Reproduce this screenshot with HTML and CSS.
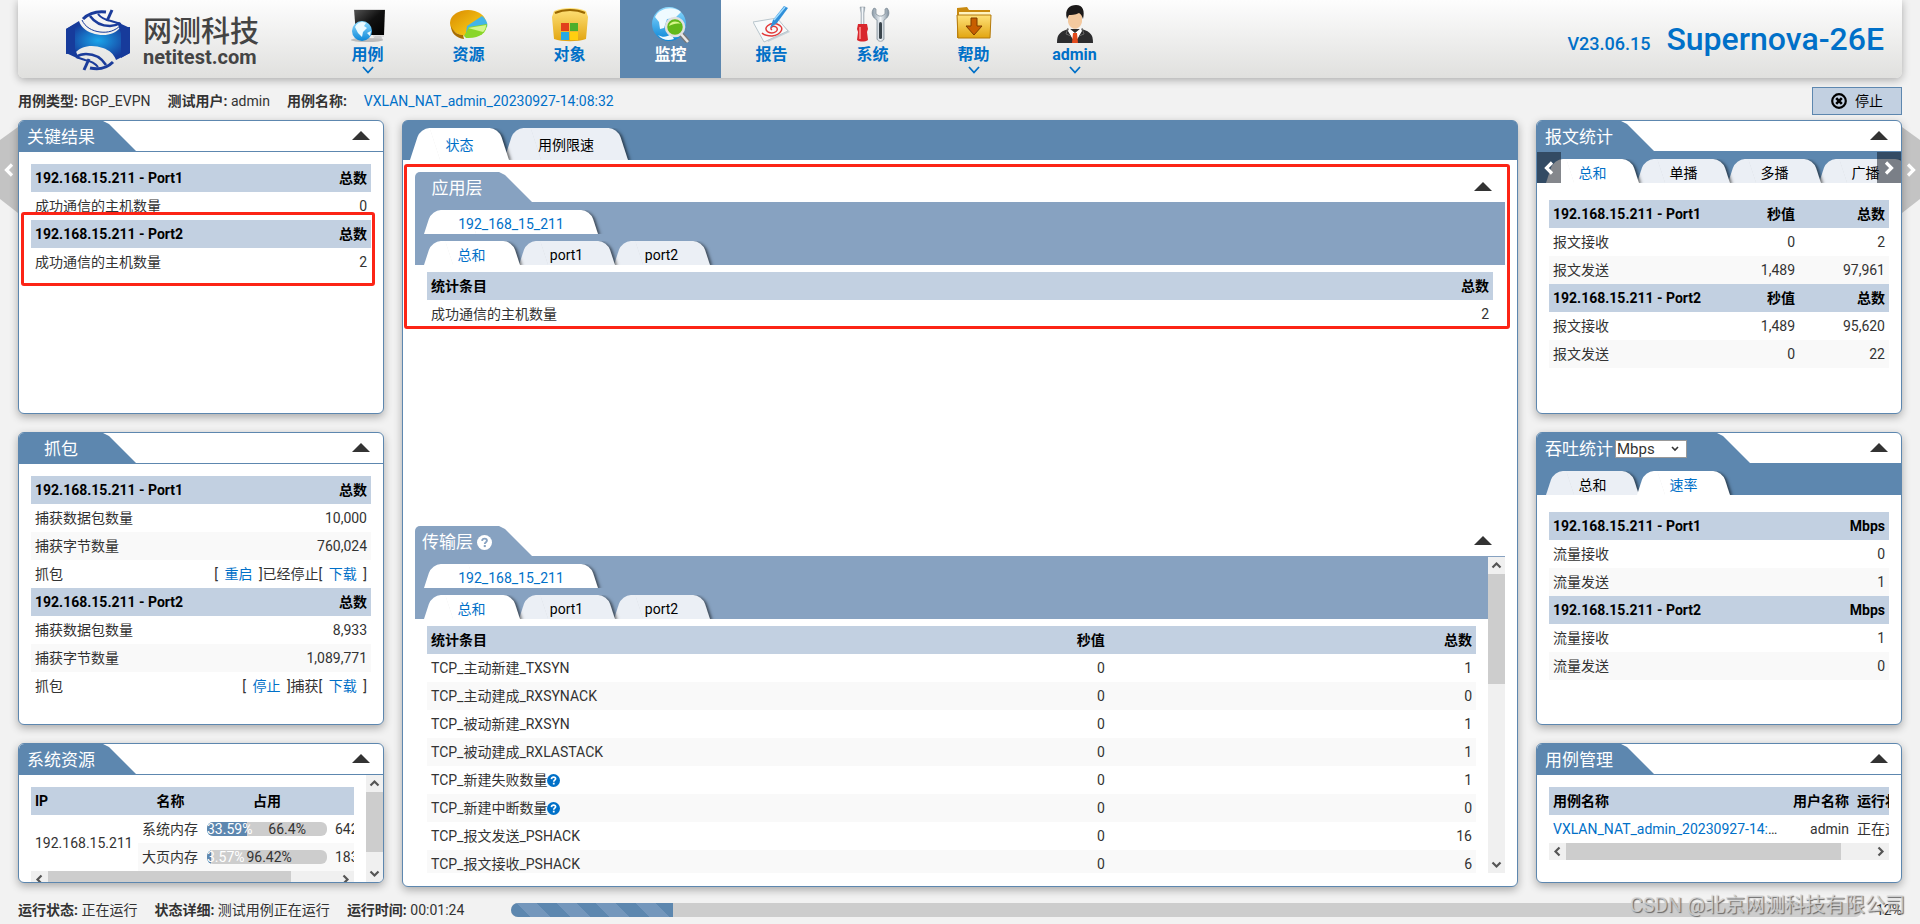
FILE: index.html
```html
<!DOCTYPE html>
<html lang="zh-CN">
<head>
<meta charset="utf-8">
<title>Supernova-26E</title>
<link rel="stylesheet" href="styles.css">
</head>
<body>
<svg class="defs" aria-hidden="true">
  <defs>
    <linearGradient id="gBlue" x1="0" y1="0" x2="0" y2="1"><stop offset="0" stop-color="#8fdcff"/><stop offset="1" stop-color="#0a86d8"/></linearGradient>
    <radialGradient id="gLogo"><stop offset="0" stop-color="#1aa5ea"/><stop offset="1" stop-color="#163a9a"/></radialGradient>
    <linearGradient id="gGold" x1="0" y1="0" x2="0" y2="1"><stop offset="0" stop-color="#ffe27a"/><stop offset="1" stop-color="#e2a511"/></linearGradient>
    <linearGradient id="gPie" x1="0" y1="0" x2="1" y2="1"><stop offset="0" stop-color="#d98a00"/><stop offset="1" stop-color="#ffdc1e"/></linearGradient>
    <linearGradient id="gDark" x1="0" y1="0" x2="1" y2="1"><stop offset="0" stop-color="#555"/><stop offset=".5" stop-color="#111"/><stop offset="1" stop-color="#000"/></linearGradient>
    <linearGradient id="gSteel" x1="0" y1="0" x2="1" y2="0"><stop offset="0" stop-color="#8797a5"/><stop offset=".5" stop-color="#f2f6f9"/><stop offset="1" stop-color="#7e8e9c"/></linearGradient>
    <symbol id="i-q" viewBox="0 0 16 16"><circle cx="8" cy="8" r="8" fill="currentColor"/><path d="M5.4 6.2C5.6 4.400 6.700 3.800 8.100 3.800c1.500 0 2.500.8 2.500 2.100 0 1.700-2.300 1.800-2.300 3.600" fill="none" stroke="var(--hole)" stroke-width="2"/><rect x="7.200" y="10.700" width="2.200" height="2.200" fill="var(--hole)"/></symbol>
    <symbol id="i-up" viewBox="0 0 17 17"><path d="M4.500 10.500l4-4 4 4" fill="none" stroke="#555" stroke-width="2.200"/></symbol>
    <symbol id="i-down" viewBox="0 0 17 17"><path d="M4.500 6.500l4 4 4-4" fill="none" stroke="#555" stroke-width="2.200"/></symbol>
    <symbol id="i-left" viewBox="0 0 17 17"><path d="M10.500 4.500l-4 4 4 4" fill="none" stroke="#555" stroke-width="2.200"/></symbol>
    <symbol id="i-right" viewBox="0 0 17 17"><path d="M6.500 4.500l4 4-4 4" fill="none" stroke="#555" stroke-width="2.200"/></symbol>
    <symbol id="i-prev" viewBox="0 0 10 14"><path d="M8 1.500L2.500 7 8 12.500" fill="none" stroke="#fff" stroke-width="3.200"/></symbol>
    <symbol id="i-next" viewBox="0 0 10 14"><path d="M2 1.500L7.500 7 2 12.500" fill="none" stroke="#fff" stroke-width="3.200"/></symbol>
    <symbol id="i-tri" viewBox="0 0 18 9"><path d="M0 9L9 0l9 9z" fill="#333"/></symbol>
    <symbol id="i-chev" viewBox="0 0 12 8"><path d="M1 1l5 5.500L11 1" fill="none" stroke="#0070c8" stroke-width="1.800"/></symbol>
  </defs>
</svg>

<header class="top">
  <a class="brand" href="#" aria-label="netitest.com">
    <svg width="66" height="62" viewBox="0 0 66 62">
      <path d="M1 20L14 12c2 6 7 10 13 12 11 4 22 2 28-5l10-1v26l-14 7c-2-6-7-10-13-12-11-4-22-2-28 5L1 45z" fill="url(#gLogo)"/>
      <path d="M52 13l13 6v25l-9 5V24z" fill="#173b9b"/>
      <path d="M14 50L1 44V20l9-5v25z" fill="#173b9b"/>
      <path d="M17 11c3 7 10 11 18 12 8 1 15-1 21-7" fill="none" stroke="#173b9b" stroke-width="1"/>
      <path d="M18 10c6-6 14-8 23-7" fill="none" stroke="#1b3c9b" stroke-width="3"/>
      <path d="M25 7c5 7 12 10 20 10 4 0 7-1 10-3" fill="none" stroke="#1b3c9b" stroke-width="2.500"/>
      <path d="M33 5c3 4 8 6 13 7l10 3" fill="none" stroke="#1b3c9b" stroke-width="2"/>
      <path d="M47 1l-5 11" stroke="#1b3c9b" stroke-width="3"/>
      <path d="M48 53c-6 6-14 8-23 6" fill="none" stroke="#1b3c9b" stroke-width="3"/>
      <path d="M41 56c-5-8-12-11-20-11-4 0-7 1-10 3" fill="none" stroke="#1b3c9b" stroke-width="2.500"/>
      <path d="M33 58c-3-4-8-6-13-7l-9-3" fill="none" stroke="#1b3c9b" stroke-width="2"/>
      <path d="M19 61l5-11" stroke="#1b3c9b" stroke-width="3"/>
    </svg>
    <span class="brand-text"><span class="brand-cn">网测科技</span><span class="brand-en">netitest.com</span></span>
  </a>
  <nav class="nav">
    <a class="nav-item" href="#">
      <svg class="nav-icon" viewBox="0 0 38 38"><path d="M5 4h31l-1 26H7z" fill="url(#gDark)"/><path d="M5 4h31v1H5zM24 30h11v2H24z" fill="#ddd"/><path d="M26 31h6l2 4h-11z" fill="#ccc"/><ellipse cx="18" cy="35" rx="16" ry="2" fill="#bbb"/><circle cx="13" cy="26" r="10" fill="url(#gBlue)"/><path d="M6 22c2-5 8-6 11-4l-2 3 3 2-4 4-1 5-4-4zM18 28l4-2-1 5z" fill="#eafaff"/></svg>
      <span>用例</span><svg class="nav-chev"><use href="#i-chev"/></svg></a>
    <a class="nav-item" href="#">
      <svg class="nav-icon" viewBox="0 0 38 38"><ellipse cx="18" cy="18" rx="18" ry="13" fill="url(#gPie)"/><path d="M1 21c3 7 8 9 12 9l1 4C6 33 1 28 1 21z" fill="#a86d00"/><path d="M17 21l15-10c5 4 6 8 5 11l-21 6z" fill="#43b5e8"/><path d="M14 31l5-9 18-3c0 9-8 15-21 14z" fill="#8ad62a"/><path d="M18 23l18-3c0 3-1 5-3 7z" fill="#d3f58d"/></svg>
      <span>资源</span><svg class="nav-chev"></svg></a>
    <a class="nav-item" href="#">
      <svg class="nav-icon" viewBox="0 0 38 38"><path d="M3 6c8-4 24-4 32 0l2 6-2 22c-8 3-24 3-32 0L1 12z" fill="url(#gGold)"/><path d="M4 8c9-4 21-4 30 0" fill="none" stroke="#9a6700" stroke-width="2"/><path d="M10 18h8v8h-8z" fill="#e2401b"/><path d="M19 18h8v8h-8z" fill="#4eae2b"/><path d="M10 27h8v8h-8z" fill="#28a9e5"/><path d="M19 27h8v8h-8z" fill="#ffcf10"/></svg>
      <span>对象</span><svg class="nav-chev"></svg></a>
    <a class="nav-item is-active" href="#">
      <svg class="nav-icon" viewBox="0 0 38 38"><circle cx="17" cy="19" r="17" fill="url(#gBlue)"/><path d="M3 12C8 2 22 1 29 7l-6 6-8 1-3 9-4 1-1-7zM6 30c5 3 9 2 13-1l3 5c-6 2-12 1-16-4z" fill="#effaff"/><path d="M29 29l7 8" stroke="#777" stroke-width="5"/><path d="M29 29l7 8" stroke="#e8e8e8" stroke-width="2.500"/><circle cx="23" cy="22" r="9" fill="#62b81a" stroke="#e0e0e0" stroke-width="2.500"/><path d="M17 21c1-5 8-6 12-2-4-1-8 0-12 2z" fill="#d7f68b"/></svg>
      <span>监控</span><svg class="nav-chev"></svg></a>
    <a class="nav-item" href="#">
      <svg class="nav-icon" viewBox="0 0 38 38"><path d="M4 16l27 5 6 6-22 10z" fill="#c9d4da"/><path d="M0 17l24-4 11 13-24 11z" fill="#f7fafb" stroke="#b8c5cc"/><path d="M19 25c-3-2 1-5 4-3 4 3-2 8-8 5-6-4 2-10 9-8 9 3 4 11-5 12-4 0-8-1-10-3" fill="none" stroke="#e23a3a" stroke-width="1.500"/><path d="M17 23l3-8L31 1l4 2-11 15z" fill="#2f8fd9"/><path d="M21 15L32 2" stroke="#9fdcff" stroke-width="1.500"/></svg>
      <span>报告</span><svg class="nav-chev"></svg></a>
    <a class="nav-item" href="#">
      <svg class="nav-icon" viewBox="0 0 38 38"><path d="M6 2h5l-1 6v12H7V8z" fill="url(#gSteel)" stroke="#8c979f" stroke-width=".5"/><path d="M4 19h9l1 5-1 3 1 8c-3 2-8 2-11 0l1-8-1-3z" fill="#d8262c"/><path d="M6 22v12" stroke="#ff9a94" stroke-width="1.500"/><path d="M20 3c-4 5-1 10 3 12v19c1 3 6 3 7 0V15c4-2 7-7 3-12l-2 1 0 5-3 2h-3l-3-2V4z" fill="url(#gSteel)" stroke="#75848f" stroke-width=".7"/><rect x="25" y="17" width="3" height="17" rx="1.500" fill="#3a444b"/></svg>
      <span>系统</span><svg class="nav-chev"></svg></a>
    <a class="nav-item" href="#">
      <svg class="nav-icon" viewBox="0 0 38 38"><path d="M2 3l10-1 2 3h21v28H2z" fill="#c98a10"/><path d="M4 7h31v3H4z" fill="#fff3c0"/><path d="M2 10h34l-1 23H3z" fill="url(#gGold)" stroke="#b47a0c"/><path d="M16 13h6v8h5l-8 9-8-9h5z" fill="#c85e00" stroke="#7d3c00"/></svg>
      <span>帮助</span><svg class="nav-chev"><use href="#i-chev"/></svg></a>
    <a class="nav-item" href="#">
      <svg class="nav-icon" viewBox="0 0 38 38"><path d="M1 38c0-8 2-11 11-14h14c9 3 11 6 11 14z" fill="#2c2c2e"/><path d="M13 23l6 5 6-5 1 3-7 12-7-12z" fill="#fff"/><path d="M17 28h4l1 10h-6z" fill="#e24a1c"/><path d="M12 23l-2 6 5 2M26 23l2 6-5 2" fill="none" stroke="#666"/><path d="M12 10c0-6 14-6 14 0v7c-2 9-12 9-14 0z" fill="#f3c99f"/><path d="M11 14C8 4 14 0 20 0c7 0 9 6 7 14-1-3-2-5-4-6-4 2-8 2-10 2z" fill="#1c1a1a"/></svg>
      <span>admin</span><svg class="nav-chev"><use href="#i-chev"/></svg></a>
  </nav>
  <div class="product"><span class="version">V23.06.15</span><span class="model">Supernova-26E</span></div>
</header>

<div class="info">
  <div class="facts">
    <span><b>用例类型:</b> BGP_EVPN</span>
    <span><b>测试用户:</b> admin</span>
    <span><b>用例名称:</b></span>
    <a href="#">VXLAN_NAT_admin_20230927-14:08:32</a>
  </div>
  <button class="stop" type="button">
    <svg width="16" height="16" viewBox="0 0 16 16"><circle cx="8" cy="8" r="6.800" fill="none" stroke="#000" stroke-width="2.200"/><path d="M5.200 5.200l5.600 5.600M10.800 5.200l-5.600 5.600" stroke="#000" stroke-width="2.600"/></svg>停止</button>
</div>

<main class="board">
  <button class="side side-left" type="button" aria-label="上一页"><svg width="10" height="14"><use href="#i-prev"/></svg></button>
  <button class="side side-right" type="button" aria-label="下一页"><svg width="10" height="14"><use href="#i-next"/></svg></button>

  <div class="col">
    <section class="panel tall">
      <div class="phead"><h2 class="ptitle">关键结果</h2><button class="fold" type="button" aria-label="折叠"><svg><use href="#i-tri"/></svg></button></div>
      <div class="pbody">
        <table>
          <tbody><tr><th>192.168.15.211 - Port1</th><th>总数</th></tr><tr><td>成功通信的主机数量</td><td>0</td></tr></tbody>
          <tbody><tr><th>192.168.15.211 - Port2</th><th>总数</th></tr><tr><td>成功通信的主机数量</td><td>2</td></tr></tbody>
        </table>
      </div>
      <div class="mark mark-port"></div>
    </section>

    <section class="panel tall">
      <div class="phead"><h2 class="ptitle">抓包</h2><button class="fold" type="button" aria-label="折叠"><svg><use href="#i-tri"/></svg></button></div>
      <div class="pbody">
        <table>
          <tbody><tr><th>192.168.15.211 - Port1</th><th>总数</th></tr>
          <tr><td>捕获数据包数量</td><td>10,000</td></tr><tr><td>捕获字节数量</td><td>760,024</td></tr>
          <tr><td>抓包</td><td>[ <a class="act" href="#">重启</a> ]已经停止[ <a class="act" href="#">下载</a> ]</td></tr></tbody>
          <tbody><tr><th>192.168.15.211 - Port2</th><th>总数</th></tr>
          <tr><td>捕获数据包数量</td><td>8,933</td></tr><tr><td>捕获字节数量</td><td>1,089,771</td></tr>
          <tr><td>抓包</td><td>[ <a class="act" href="#">停止</a> ]捕获[ <a class="act" href="#">下载</a> ]</td></tr></tbody>
        </table>
      </div>
    </section>

    <section class="panel short">
      <div class="phead"><h2 class="ptitle">系统资源</h2><button class="fold" type="button" aria-label="折叠"><svg><use href="#i-tri"/></svg></button></div>
      <div class="scroller">
        <div class="pbody">
          <div class="clip">
            <table class="res">
              <colgroup><col class="c-ip"><col class="c-name"><col class="c-use"><col class="c-size"></colgroup>
              <tbody>
                <tr><th>IP</th><th>名称</th><th>占用</th><th></th></tr>
                <tr><td rowspan="2">192.168.15.211</td><td>系统内存</td><td><div class="meter"><span class="used" style="width:33.59%">33.59%</span><span class="free">66.4%</span></div></td><td>6424MB</td></tr>
                <tr><td>大页内存</td><td><div class="meter"><span class="used" style="width:3.57%">3.57%</span><span class="free">96.42%</span></div></td><td>18342MB</td></tr>
              </tbody>
            </table>
          </div>
          <div class="hbar"><svg><use href="#i-left"/></svg><div class="track"><div class="thumb" style="width:84%"></div></div><svg><use href="#i-right"/></svg></div>
        </div>
        <div class="vbar"><svg><use href="#i-up"/></svg><div class="track"><div class="thumb" style="height:82%"></div></div><svg><use href="#i-down"/></svg></div>
      </div>
    </section>
  </div>

  <section class="panel center">
    <div class="tabs tabs-main"><button class="tab on" type="button"><span>状态</span></button><button class="tab" type="button"><span>用例限速</span></button></div>
    <div class="stack">
      <section class="layer layer-app">
        <div class="phead"><h3 class="ptitle">应用层</h3><button class="fold" type="button" aria-label="折叠"><svg><use href="#i-tri"/></svg></button></div>
        <div class="tabs"><button class="tab wide on" type="button"><span>192_168_15_211</span></button></div>
        <div class="tabs"><button class="tab on" type="button"><span>总和</span></button><button class="tab" type="button"><span>port1</span></button><button class="tab" type="button"><span>port2</span></button></div>
        <div class="lbody">
          <table><tbody><tr><th>统计条目</th><th>总数</th></tr><tr><td>成功通信的主机数量</td><td>2</td></tr></tbody></table>
        </div>
      </section>
      <section class="layer layer-tcp">
        <div class="phead"><h3 class="ptitle">传输层<svg class="q q-head"><use href="#i-q"/></svg></h3><button class="fold" type="button" aria-label="折叠"><svg><use href="#i-tri"/></svg></button></div>
        <div class="scroller">
          <div class="pane">
            <div class="tabs"><button class="tab wide on" type="button"><span>192_168_15_211</span></button></div>
            <div class="tabs"><button class="tab on" type="button"><span>总和</span></button><button class="tab" type="button"><span>port1</span></button><button class="tab" type="button"><span>port2</span></button></div>
            <div class="lbody">
              <table class="tcp">
                <colgroup><col class="c-item"><col class="c-rate"><col class="c-total"></colgroup>
                <tbody>
                  <tr><th>统计条目</th><th>秒值</th><th>总数</th></tr>
                  <tr><td>TCP_主动新建_TXSYN</td><td>0</td><td>1</td></tr>
                  <tr><td>TCP_主动建成_RXSYNACK</td><td>0</td><td>0</td></tr>
                  <tr><td>TCP_被动新建_RXSYN</td><td>0</td><td>1</td></tr>
                  <tr><td>TCP_被动建成_RXLASTACK</td><td>0</td><td>1</td></tr>
                  <tr><td>TCP_新建失败数量<svg class="q"><use href="#i-q"/></svg></td><td>0</td><td>1</td></tr>
                  <tr><td>TCP_新建中断数量<svg class="q"><use href="#i-q"/></svg></td><td>0</td><td>0</td></tr>
                  <tr><td>TCP_报文发送_PSHACK</td><td>0</td><td>16</td></tr>
                  <tr><td>TCP_报文接收_PSHACK</td><td>0</td><td>6</td></tr>
                </tbody>
              </table>
            </div>
          </div>
          <div class="vbar"><svg><use href="#i-up"/></svg><div class="track"><div class="thumb" style="height:39%"></div></div><svg><use href="#i-down"/></svg></div>
        </div>
      </section>
    </div>
    <div class="mark mark-app"></div>
  </section>

  <div class="col">
    <section class="panel tall">
      <div class="phead"><h2 class="ptitle">报文统计</h2><button class="fold" type="button" aria-label="折叠"><svg><use href="#i-tri"/></svg></button></div>
      <div class="tabs tabs-side">
        <button class="tab on" type="button"><span>总和</span></button><button class="tab" type="button"><span>单播</span></button><button class="tab" type="button"><span>多播</span></button><button class="tab" type="button"><span>广播</span></button>
        <button class="slide slide-l" type="button" aria-label="向左"><svg width="10" height="14"><use href="#i-prev"/></svg></button>
        <button class="slide slide-r" type="button" aria-label="向右"><svg width="10" height="14"><use href="#i-next"/></svg></button>
      </div>
      <div class="pbody under-tabs">
        <table class="three">
          <colgroup><col><col class="c-sec"><col class="c-sum"></colgroup>
          <tbody><tr><th>192.168.15.211 - Port1</th><th>秒值</th><th>总数</th></tr><tr><td>报文接收</td><td>0</td><td>2</td></tr><tr><td>报文发送</td><td>1,489</td><td>97,961</td></tr></tbody>
          <tbody><tr><th>192.168.15.211 - Port2</th><th>秒值</th><th>总数</th></tr><tr><td>报文接收</td><td>1,489</td><td>95,620</td></tr><tr><td>报文发送</td><td>0</td><td>22</td></tr></tbody>
        </table>
      </div>
    </section>

    <section class="panel tall">
      <div class="phead"><h2 class="ptitle ptitle-select"><label for="unit">吞吐统计</label><span class="pick"><select id="unit"><option>Mbps</option></select><svg width="8" height="6" viewBox="0 0 8 6"><path d="M1 1l3 3 3-3" fill="none" stroke="#333" stroke-width="1.600"/></svg></span></h2><button class="fold" type="button" aria-label="折叠"><svg><use href="#i-tri"/></svg></button></div>
      <div class="tabs tabs-side"><button class="tab" type="button"><span>总和</span></button><button class="tab on" type="button"><span>速率</span></button></div>
      <div class="pbody under-tabs">
        <table>
          <tbody><tr><th>192.168.15.211 - Port1</th><th>Mbps</th></tr><tr><td>流量接收</td><td>0</td></tr><tr><td>流量发送</td><td>1</td></tr></tbody>
          <tbody><tr><th>192.168.15.211 - Port2</th><th>Mbps</th></tr><tr><td>流量接收</td><td>1</td></tr><tr><td>流量发送</td><td>0</td></tr></tbody>
        </table>
      </div>
    </section>

    <section class="panel short">
      <div class="phead"><h2 class="ptitle">用例管理</h2><button class="fold" type="button" aria-label="折叠"><svg><use href="#i-tri"/></svg></button></div>
      <div class="pbody">
        <div class="clip">
          <table class="cases">
            <colgroup><col class="c-case"><col class="c-user"><col class="c-state"></colgroup>
            <tbody><tr><th>用例名称</th><th>用户名称</th><th>运行状态</th></tr>
            <tr><td><a href="#">VXLAN_NAT_admin_20230927-14:08:32</a></td><td>admin</td><td>正在运行</td></tr></tbody>
          </table>
        </div>
        <div class="hbar"><svg><use href="#i-left"/></svg><div class="track"><div class="thumb" style="width:90%"></div></div><svg><use href="#i-right"/></svg></div>
      </div>
    </section>
  </div>
</main>

<footer class="status">
  <div class="facts">
    <span><b>运行状态:</b> 正在运行</span>
    <span><b>状态详细:</b> 测试用例正在运行</span>
    <span><b>运行时间:</b> 00:01:24</span>
  </div>
  <div class="progress"><div class="progress-fill" style="width:12%"></div></div>
  <span class="percent">12%</span>
  <span class="watermark">CSDN @北京网测科技有限公司</span>
</footer>
</body>
</html>
```
FILE: styles.css
```css
:root {
  --blue: #5d87af;
  --soft: #87a2c1;
  --head: #c2d0e1;
  --link: #0070c8;
  --hole: #fff;
}
* { box-sizing: border-box; }
body {
  margin: 0;
  min-height: 100vh;
  display: flex;
  flex-direction: column;
  background: #f2f2f2;
  color: #333;
  font: 14px/20px Roboto, "Noto Sans CJK SC", sans-serif;
  overflow-x: hidden;
}
a { color: var(--link); text-decoration: none; }
button { font: inherit; border: 0; padding: 0; background: none; cursor: pointer; }
h2, h3 { margin: 0; font-weight: 400; }
.defs { position: absolute; width: 0; height: 0; }

.top {
  margin: 0 18px;
  height: 78px;
  display: flex;
  background: linear-gradient(#fdfdfd, #e0e0de);
  border-radius: 0 0 6px 6px;
  box-shadow: 0 2px 8px rgba(0, 0, 0, .3);
}
.brand { width: 299px; padding: 9px 0 0 47px; display: flex; gap: 12px; color: #444; }
.brand-text { display: flex; flex-direction: column; padding-top: 8px; }
.brand-cn { font-size: 29px; line-height: 30px; font-weight: 500; }
.brand-en { font-size: 20px; line-height: 20px; font-weight: 700; }
.nav { display: flex; }
.nav-item {
  width: 101px;
  display: flex;
  flex-direction: column;
  align-items: center;
  padding-top: 5px;
  font-size: 16px;
  line-height: 22px;
  font-weight: 700;
}
.nav-icon { width: 38px; height: 38px; margin-bottom: 1px; }
.nav-chev { width: 12px; height: 8px; }
.nav-item.is-active { background: var(--blue); color: #fff; }
.product {
  margin-left: auto;
  padding: 20px 18px 0 0;
  display: flex;
  align-items: baseline;
  gap: 16px;
  color: var(--link);
  font-weight: 500;
  line-height: 38px;
}
.version { font-size: 18px; }
.model { font-size: 32px; }

.info { height: 42px; padding: 9px 18px 5px; display: flex; justify-content: space-between; align-items: center; }
.facts { display: flex; gap: 17px; }
.facts b { font-weight: 700; }
.stop {
  width: 90px;
  height: 28px;
  display: flex;
  align-items: center;
  justify-content: center;
  gap: 8px;
  background: var(--head);
  border: 1px solid var(--blue);
  color: #000;
}

.board {
  position: relative;
  padding: 0 18px;
  display: grid;
  grid-template-columns: 366px minmax(0, 1fr) 366px;
  gap: 18px;
}
.col { display: flex; flex-direction: column; gap: 18px; padding-bottom: 4px; }
.panel {
  position: relative;
  display: flex;
  flex-direction: column;
  background: #fff;
  border: 1px solid var(--blue);
  border-radius: 6px;
  box-shadow: 0 3px 8px rgba(0, 0, 0, .3);
}
.tall { min-height: 294px; }
.tall + .tall { min-height: 293px; }
.short { height: 140px; overflow: hidden; }
.phead {
  height: 31px;
  flex: none;
  display: flex;
  justify-content: space-between;
  border-bottom: 1px solid var(--blue);
}
.ptitle {
  height: 31px;
  min-width: 118px;
  padding: 2px 34px 0 0;
  display: flex;
  align-items: center;
  justify-content: center;
  background: var(--blue);
  border-radius: 5px 0 0 0;
  clip-path: polygon(0 0, calc(100% - 34px) 0, calc(100% - 28px) 3px, 100% 31px, 0 31px);
  color: #fff;
  font-size: 17px;
  line-height: 29px;
}
.ptitle-select { min-width: 214px; justify-content: flex-start; padding-left: 8px; gap: 2px; }
.pick { position: relative; display: flex; height: 18px; margin-bottom: 2px; }
.pick select {
  width: 72px;
  height: 18px;
  padding: 0 0 0 1px;
  appearance: none;
  border: 1px solid #999;
  border-radius: 0;
  background: #fff;
  color: #333;
  font: 15px/16px Roboto, sans-serif;
}
.pick svg { position: absolute; right: 8px; top: 6px; }
.fold { width: 18px; height: 9px; margin: 10px 13px 0 0; }
.fold svg { display: block; width: 18px; height: 9px; }
.pbody { padding: 12px 12px 0; }
.under-tabs { padding-top: 17px; }

table { width: 100%; border-collapse: collapse; }
th, td { height: 28px; padding: 0 4px; text-align: right; white-space: nowrap; }
th { background: var(--head); color: #000; font-weight: 700; }
th:first-child, td:first-child { text-align: left; }
tr:nth-child(odd) td { background: #f9f9f9; }
.act { margin: 0 3px; }
.three, .tcp, .res, .cases { table-layout: fixed; }
.c-sec { width: 90px; }
.c-sum { width: 90px; }
.c-item { width: 52%; }
.c-rate { width: 13%; }
.c-total { width: 35%; }

.tabs { display: flex; padding: 7px 9px 0; background: var(--blue); position: relative; isolation: isolate; }
.tab {
  position: relative;
  flex: none;
  height: 24px;
  width: 95px;
  color: #000;
  line-height: 28px;
  isolation: isolate;
}
.tab:nth-child(1) { z-index: 4; }
.tab:nth-child(2) { z-index: 3; }
.tab:nth-child(3) { z-index: 2; }
.tab.on { z-index: 5; color: var(--link); }
.tab::before, .tab::after {
  content: "";
  position: absolute;
  z-index: -1;
  top: 0;
  bottom: 0;
  background: #ebeff5;
}
.tab::before { left: 0; right: 30%; border-radius: 9px 0 0 0; transform: skewX(-18deg); transform-origin: 0 100%; }
.tab::after {
  left: 30%;
  right: 0;
  border-radius: 0 9px 0 0;
  transform: skewX(18deg);
  transform-origin: 100% 100%;
  box-shadow: 2px 1px 3px rgba(0, 0, 0, .55);
  clip-path: inset(0 -8px 0 0);
}
.tab.on::before, .tab.on::after { background: #fff; }
.tab.wide { width: 174px; }
.tabs-side .tab { width: 93px; margin-right: -2px; }
.tabs-side { overflow: hidden; }
.tabs-main { border-radius: 4px 4px 0 0; padding-left: 7px; }
.tabs-main .tab { height: 32px; width: 99px; line-height: 34px; margin-right: -5px; }
.tabs-main .tab + .tab { width: 124px; }
.slide {
  position: absolute;
  z-index: 9;
  top: 0;
  bottom: 0;
  width: 24px;
  display: flex;
  align-items: center;
  justify-content: center;
  background: rgba(10, 15, 25, .5);
}
.slide-l { left: 0; }
.slide-r { right: 0; }

.center { min-height: 767px; }
.stack { flex: 1; padding: 12px 12px 13px; display: flex; flex-direction: column; }
.layer { display: flex; flex-direction: column; }
.layer .phead { border-color: var(--soft); }
.layer .ptitle { background: var(--soft); }
.layer .tabs { background: var(--soft); }
.layer-app { flex: 1; }
.lbody { padding: 7px 12px 0; }
.layer-tcp { height: 347px; }
.layer-tcp .ptitle { padding-left: 7px; padding-right: 32px; justify-content: flex-start; gap: 4px; }
.q { width: 13px; height: 13px; color: var(--link); vertical-align: -2px; }
.q-head { width: 15px; height: 15px; color: #fff; --hole: var(--soft); }

.scroller { flex: 1; min-height: 0; display: flex; overflow: hidden; }
.scroller > .pbody, .pane { flex: 1; min-width: 0; overflow: hidden; }
.vbar { width: 17px; flex: none; display: flex; flex-direction: column; background: #f0f0f0; }
.hbar { height: 17px; display: flex; background: #f0f0f0; }
.vbar svg, .hbar svg { width: 17px; height: 17px; flex: none; }
.track { flex: 1; min-width: 0; min-height: 0; }
.thumb { width: 100%; height: 100%; background: #cdcdcd; }
.clip { overflow: hidden; }
.res { width: 400px; }
.c-ip { width: 107px; }
.c-name { width: 65px; }
.c-use { width: 128px; }
.res th:nth-child(2), .res th:nth-child(3) { text-align: center; }
.res td { text-align: left; }
.res td[rowspan] { background: #fff; }
.meter { display: flex; width: 120px; height: 14px; line-height: 15px; background: #cdcdcd; border-radius: 6px; overflow: hidden; }
.used { flex: none; background: var(--blue); color: #fff; white-space: nowrap; }
.free { flex: 1; text-align: center; }
.cases { width: 420px; }
.c-case { width: 238px; }
.c-user { width: 66px; }
.cases td:first-child { overflow: hidden; text-overflow: ellipsis; }
.cases th:last-child, .cases td:last-child { text-align: left; }

.side {
  position: absolute;
  top: 7px;
  width: 18px;
  height: 86px;
  display: flex;
  align-items: center;
  justify-content: center;
  background: #c3c3c3;
}
.side-left { left: 0; clip-path: polygon(0 13px, 100% 0, 100% 100%, 0 72px); }
.side-right { right: 0; clip-path: polygon(0 0, 100% 13px, 100% 72px, 0 100%); }
.mark { position: absolute; z-index: 10; border: 3px solid #fc2416; border-radius: 3px; pointer-events: none; }
.mark-port { left: 2px; right: 8px; top: 91px; height: 74px; }
.mark-app { left: 1px; right: 7px; top: 43px; height: 165px; }

.status { position: relative; padding: 13px 18px 4px; display: flex; align-items: center; }
.progress { flex: 1; height: 14px; margin-left: 47px; background: #cdcdcd; border-radius: 7px; overflow: hidden; }
.progress-fill {
  height: 100%;
  background: repeating-linear-gradient(45deg, #5d87af 0 14px, #7497bc 14px 28px);
}
.percent { width: 40px; text-align: right; }
.watermark {
  position: absolute;
  right: 15px;
  top: 4px;
  color: rgba(215, 215, 215, .8);
  font-size: 20px;
  line-height: 28px;
  text-shadow: 1px 1px 1px #666;
}
```
